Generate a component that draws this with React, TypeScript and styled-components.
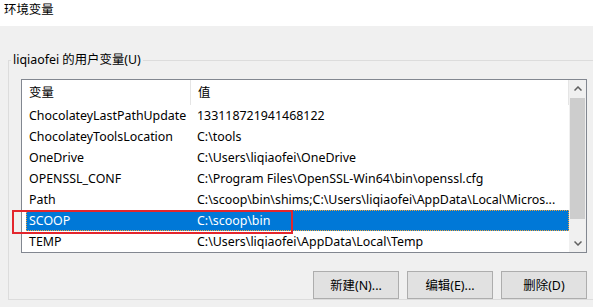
import styled, { createGlobalStyle } from "styled-components";

const GlobalStyle = createGlobalStyle`
  html, body {
    margin: 0;
    padding: 0;
    background: #f0f0f0;
    overflow: hidden;
  }
  body {
    font-family: "Noto Sans", "Noto Sans CJK SC", sans-serif;
    font-size: 12.4px;
    color: #000;
  }
`;

interface EnvVar {
  name: string;
  value: string;
}

const vars: EnvVar[] = [
  { name: "ChocolateyLastPathUpdate", value: "133118721941468122" },
  { name: "ChocolateyToolsLocation", value: "C:\\tools" },
  { name: "OneDrive", value: "C:\\Users\\liqiaofei\\OneDrive" },
  { name: "OPENSSL_CONF", value: "C:\\Program Files\\OpenSSL-Win64\\bin\\openssl.cfg" },
  {
    name: "Path",
    value: "C:\\scoop\\bin\\shims;C:\\Users\\liqiaofei\\AppData\\Local\\Micros...",
  },
  { name: "SCOOP", value: "C:\\scoop\\bin" },
  { name: "TEMP", value: "C:\\Users\\liqiaofei\\AppData\\Local\\Temp" },
];

const selectedName = "SCOOP";

export default function App() {
  return (
    <Window>
      <GlobalStyle />
      <TitleBar>环境变量</TitleBar>
      <GroupBox>
        <Legend>liqiaofei 的用户变量(U)</Legend>
        <ListBox>
          <ListArea>
            <HeaderRow>
              <HeaderCell $width={169}>变量</HeaderCell>
              <HeaderCell>值</HeaderCell>
            </HeaderRow>
            {vars.map((v) => (
              <Row key={v.name} $selected={v.name === selectedName}>
                <NameCell>{v.name}</NameCell>
                <ValueCell>{v.value}</ValueCell>
              </Row>
            ))}
          </ListArea>
          <ScrollBar>
            <ArrowButton>
              <svg width="8" height="5" viewBox="0 0 8 5">
                <polyline points="0.5,4.5 4,1 7.5,4.5" fill="none" stroke="#606060" strokeWidth="1.5" />
              </svg>
            </ArrowButton>
            <Track>
              <Thumb />
            </Track>
            <ArrowButton>
              <svg width="8" height="5" viewBox="0 0 8 5">
                <polyline points="0.5,0.5 4,4 7.5,0.5" fill="none" stroke="#606060" strokeWidth="1.5" />
              </svg>
            </ArrowButton>
          </ScrollBar>
          <Callout />
        </ListBox>
        <ButtonRow>
          <Button>新建(N)...</Button>
          <Button>编辑(E)...</Button>
          <Button>删除(D)</Button>
        </ButtonRow>
      </GroupBox>
    </Window>
  );
}

const Window = styled.div`
  width: 593px;
  height: 307px;
  background: #f0f0f0;
  overflow: hidden;
`;

const TitleBar = styled.div`
  height: 26px;
  box-sizing: border-box;
  padding: 3px 0 0 4px;
  line-height: 14px;
  background: #fff;
`;

const GroupBox = styled.fieldset`
  margin: 27px 0 0 8px;
  padding: 12px 12px 0 12px;
  width: 566px;
  border: 1px solid #dcdcdc;
  min-width: 0;
`;

const Legend = styled.legend`
  margin-left: -10px;
  padding: 0 2px;
  line-height: 14px;
`;

const ListBox = styled.div`
  position: relative;
  display: flex;
  height: 174px;
  box-sizing: border-box;
  border: 1px solid #828790;
  background: #fff;
`;

const ListArea = styled.div`
  flex: 1;
  overflow: hidden;
`;

const HeaderRow = styled.div`
  display: flex;
  height: 25px;
  align-items: stretch;
`;

const HeaderCell = styled.div<{ $width?: number }>`
  ${(p) => (p.$width ? `width: ${p.$width}px;` : "flex: 1;")}
  box-sizing: border-box;
  display: flex;
  align-items: center;
  padding-left: 7px;
  padding-bottom: 1px;
  border-right: 1px solid #e5e5e5;
`;

const Row = styled.div<{ $selected?: boolean }>`
  display: flex;
  align-items: center;
  height: 21px;
  margin-left: 4px;
  padding-left: 3px;
  white-space: nowrap;
  background: ${(p) => (p.$selected ? "#0078d7" : "transparent")};
  color: ${(p) => (p.$selected ? "#fff" : "#000")};
  outline: ${(p) => (p.$selected ? "1px dotted #f0a33c" : "none")};
  outline-offset: -1px;
`;

const NameCell = styled.div`
  width: 168px;
  flex-shrink: 0;
`;

const ValueCell = styled.div`
  flex: 1;
  overflow: hidden;
`;

const ScrollBar = styled.div`
  width: 17px;
  display: flex;
  flex-direction: column;
  background: #f0f0f0;
`;

const ArrowButton = styled.div`
  height: 17px;
  display: flex;
  align-items: center;
  justify-content: center;
`;

const Track = styled.div`
  flex: 1;
  padding-top: 1px;
`;

const Thumb = styled.div`
  height: 121px;
  margin: 0 1px;
  background: #cdcdcd;
`;

const Callout = styled.div`
  position: absolute;
  left: -10px;
  top: 130px;
  width: 281px;
  height: 24px;
  box-sizing: border-box;
  border: 2px solid #e3262d;
  pointer-events: none;
`;

const ButtonRow = styled.div`
  display: flex;
  justify-content: flex-end;
  gap: 8px;
  margin-top: 18px;
`;

const Button = styled.button`
  width: 86px;
  height: 28px;
  padding: 0;
  background: #e1e1e1;
  border: 1px solid #adadad;
  font-family: "Noto Sans", "Noto Sans CJK SC", sans-serif;
  font-size: 12.4px;
  color: #000;
`;
